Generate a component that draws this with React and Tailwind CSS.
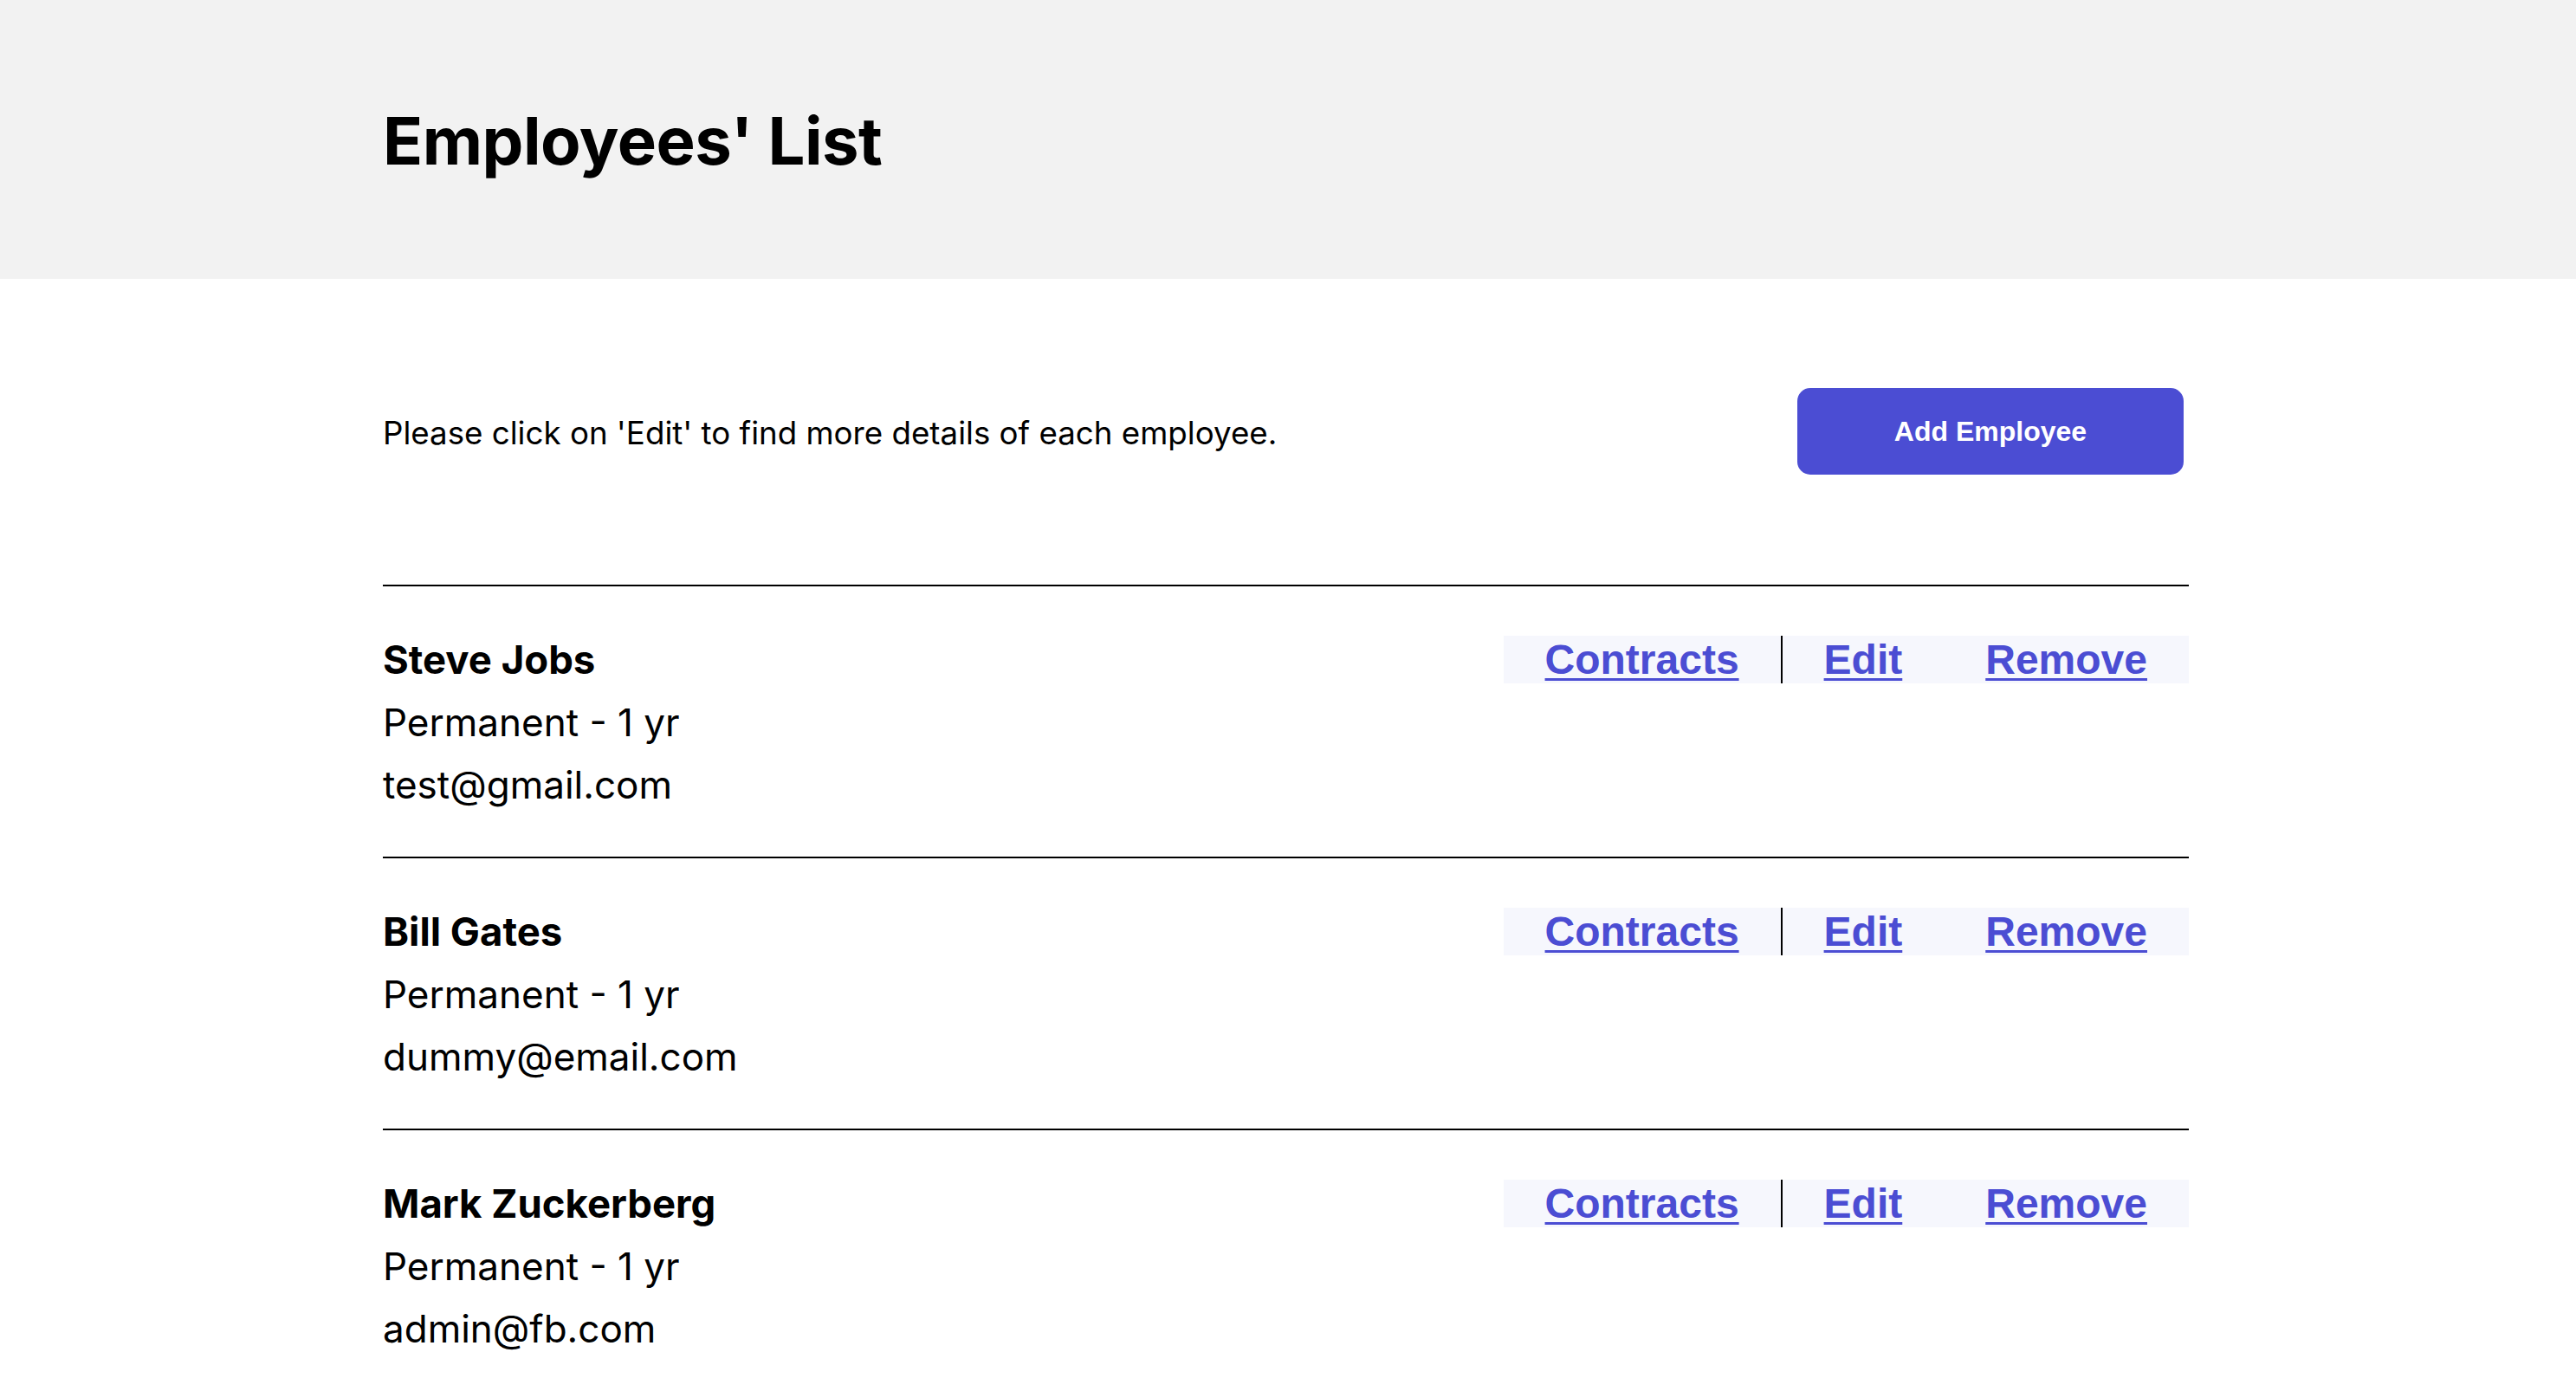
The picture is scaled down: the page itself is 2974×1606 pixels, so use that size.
import React from "react";

const employees = [
  { name: "Steve Jobs", contract: "Permanent - 1 yr", email: "test@gmail.com" },
  { name: "Bill Gates", contract: "Permanent - 1 yr", email: "dummy@email.com" },
  { name: "Mark Zuckerberg", contract: "Permanent - 1 yr", email: "admin@fb.com" },
];

const linkClass =
  "px-[48px] text-[48px] leading-[55px] font-bold text-[#4b4dd3] underline decoration-[3px] underline-offset-[5px]";

const EmployeeRow = ({ employee }) => (
  <div className="border-t-2 border-black pt-[49px] pb-[47px] flex justify-between items-start">
    <div className="text-[44px] leading-[72px] text-black">
      <p className="font-bold text-[45.5px]">{employee.name}</p>
      <p>{employee.contract}</p>
      <p>{employee.email}</p>
    </div>
    <div
      className="mt-[8px] flex bg-[#f6f7fd]"
      style={{ fontFamily: "'Liberation Sans', Arial, sans-serif" }}
    >
      <a href="#" className={`${linkClass} border-r-2 border-black`}>
        Contracts
      </a>
      <a href="#" className={linkClass}>
        Edit
      </a>
      <a href="#" className={linkClass}>
        Remove
      </a>
    </div>
  </div>
);

const App = () => {
  return (
    <div className="min-h-screen bg-white font-['Inter',sans-serif] text-black">
      <header className="h-[322px] bg-[#f2f2f2] flex items-center pl-[442px] pr-[447px]">
        <h1 className="pt-[2px] text-[76px] leading-[94px] font-bold tracking-[-0.5px]">
          Employees' List
        </h1>
      </header>

      <main className="pl-[442px] pr-[447px]">
        <div className="pt-[126px] pb-[127px] flex items-center justify-between">
          <p className="text-[36.7px] pt-[3px]">
            Please click on 'Edit' to find more details of each employee.
          </p>
          <button
            className="mr-[6px] w-[446px] h-[100px] rounded-[15px] bg-[#4b4dd3] text-white text-[32px] font-bold"
            style={{ fontFamily: "'Liberation Sans', Arial, sans-serif" }}
          >
            Add Employee
          </button>
        </div>

        {employees.map((employee) => (
          <EmployeeRow key={employee.email} employee={employee} />
        ))}
      </main>
    </div>
  );
};

export default App;
